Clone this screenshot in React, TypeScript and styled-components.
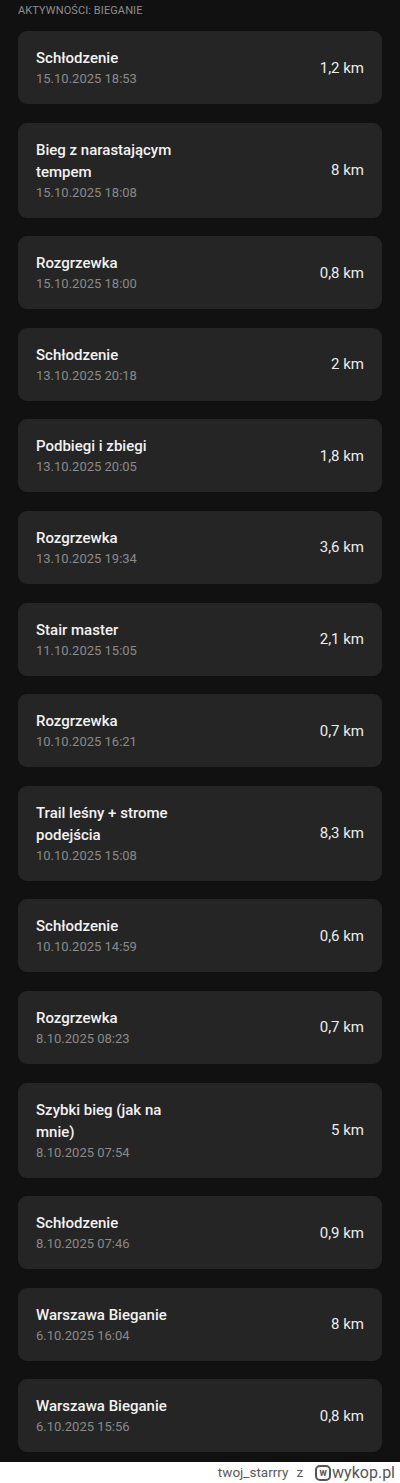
import React from 'react';
import styled, { createGlobalStyle } from 'styled-components';

type Activity = {
  id: number;
  name: string;
  date: string;
  distance: string;
};

const activities: Activity[] = [
  { id: 1, name: 'Schłodzenie', date: '15.10.2025 18:53', distance: '1,2 km' },
  { id: 2, name: 'Bieg z narastającym tempem', date: '15.10.2025 18:08', distance: '8 km' },
  { id: 3, name: 'Rozgrzewka', date: '15.10.2025 18:00', distance: '0,8 km' },
  { id: 4, name: 'Schłodzenie', date: '13.10.2025 20:18', distance: '2 km' },
  { id: 5, name: 'Podbiegi i zbiegi', date: '13.10.2025 20:05', distance: '1,8 km' },
  { id: 6, name: 'Rozgrzewka', date: '13.10.2025 19:34', distance: '3,6 km' },
  { id: 7, name: 'Stair master', date: '11.10.2025 15:05', distance: '2,1 km' },
  { id: 8, name: 'Rozgrzewka', date: '10.10.2025 16:21', distance: '0,7 km' },
  { id: 9, name: 'Trail leśny + strome podejścia', date: '10.10.2025 15:08', distance: '8,3 km' },
  { id: 10, name: 'Schłodzenie', date: '10.10.2025 14:59', distance: '0,6 km' },
  { id: 11, name: 'Rozgrzewka', date: '8.10.2025 08:23', distance: '0,7 km' },
  { id: 12, name: 'Szybki bieg (jak na mnie)', date: '8.10.2025 07:54', distance: '5 km' },
  { id: 13, name: 'Schłodzenie', date: '8.10.2025 07:46', distance: '0,9 km' },
  { id: 14, name: 'Warszawa Bieganie', date: '6.10.2025 16:04', distance: '8 km' },
  { id: 15, name: 'Warszawa Bieganie', date: '6.10.2025 15:56', distance: '0,8 km' },
];

const GlobalStyle = createGlobalStyle`
  html, body {
    margin: 0;
    padding: 0;
    background: #ffffff;
  }
  body {
    font-family: Roboto, "Liberation Sans", sans-serif;
  }
`;

const Screen = styled.main`
  background-color: #111111;
  height: 1462px;
  padding: 0 18px;
  box-sizing: border-box;
  overflow: hidden;
`;

const SectionLabel = styled.div`
  color: #8d8d8d;
  font-size: 11px;
  line-height: 16px;
  padding-top: 3px;
  margin-bottom: 12px;
  letter-spacing: 0.1px;
`;

const List = styled.div`
  display: flex;
  flex-direction: column;
  gap: 18.6px;
`;

const Card = styled.div`
  display: flex;
  align-items: center;
  justify-content: space-between;
  background-color: #252525;
  border-radius: 9px;
  padding: 16px 18px;
`;

const Info = styled.div`
  max-width: 160px;
`;

const Title = styled.div`
  color: #f2f2f2;
  font-size: 15px;
  font-weight: 500;
  line-height: 22px;
`;

const DateText = styled.div`
  color: #8a8a8a;
  font-size: 13px;
  line-height: 19px;
`;

const Distance = styled.div`
  color: #ececec;
  font-size: 15px;
  line-height: 22px;
`;

const Footer = styled.footer`
  height: 21px;
  background: #ffffff;
  display: flex;
  align-items: center;
  justify-content: flex-end;
  padding-right: 5px;
  font-family: Roboto, "Liberation Sans", sans-serif;
  color: #5a5a5a;
`;

const Author = styled.span`
  font-size: 13.5px;
  line-height: 21px;
  margin-right: 8px;
`;

const Brand = styled.span`
  display: flex;
  align-items: center;
  gap: 1px;
  margin-left: 4px;
  font-size: 16px;
  line-height: 21px;
  color: #555555;
`;

const BrandMark = styled.span`
  display: inline-flex;
  align-items: center;
  justify-content: center;
  width: 12px;
  height: 12px;
  border: 2px solid #555555;
  border-radius: 5px;
  font-size: 10px;
  font-weight: 700;
  line-height: 1;
`;

const App: React.FC = () => {
  return (
    <>
      <GlobalStyle />
      <Screen>
        <SectionLabel>AKTYWNOŚCI: BIEGANIE</SectionLabel>
        <List>
          {activities.map((a) => (
            <Card key={a.id}>
              <Info>
                <Title>{a.name}</Title>
                <DateText>{a.date}</DateText>
              </Info>
              <Distance>{a.distance}</Distance>
            </Card>
          ))}
        </List>
      </Screen>
      <Footer>
        <Author>twoj_starrry</Author>
        <Author>z</Author>
        <Brand>
          <BrandMark>w</BrandMark>
          wykop.pl
        </Brand>
      </Footer>
    </>
  );
};

export default App;
